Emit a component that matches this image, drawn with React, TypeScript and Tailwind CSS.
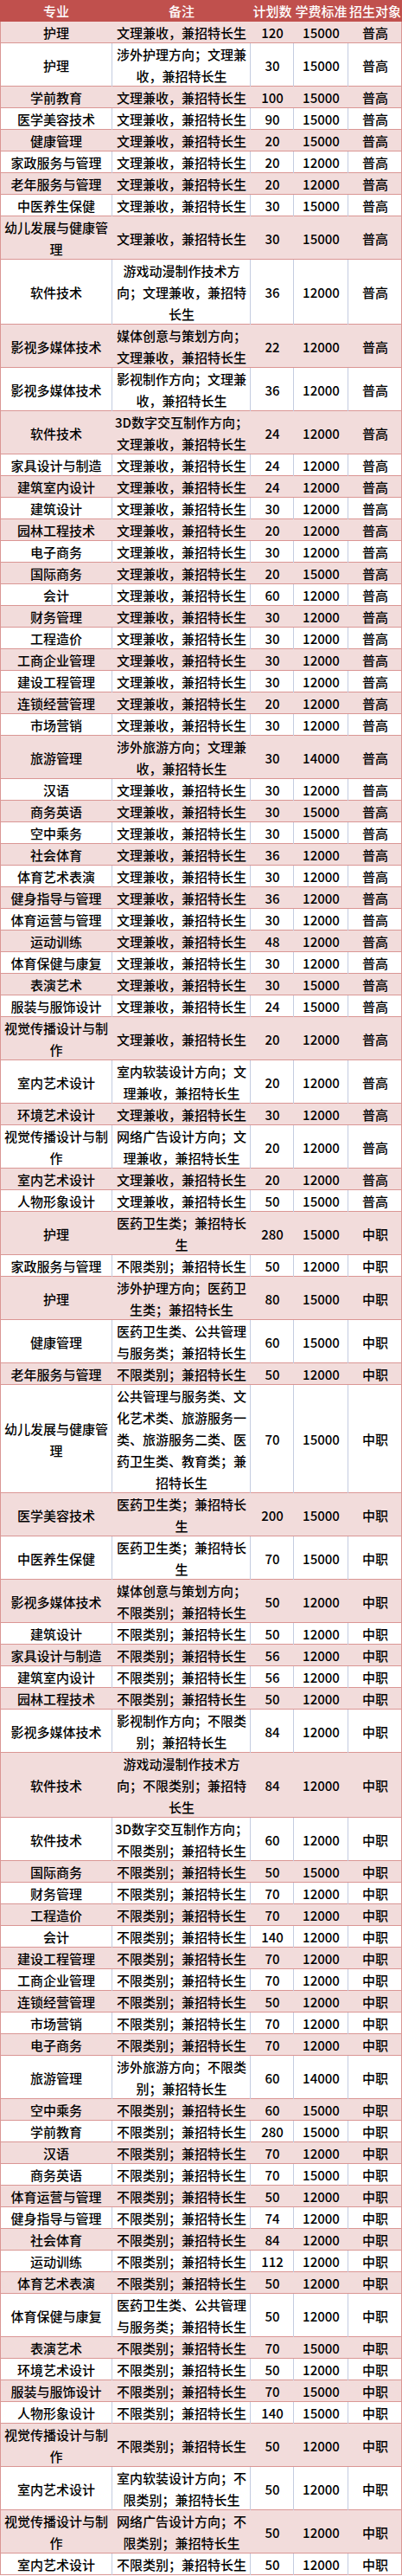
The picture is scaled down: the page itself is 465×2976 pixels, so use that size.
const A = "文理兼收，兼招特长生"
const B = "不限类别；兼招特长生"

// [专业, 备注, 计划数, 学费标准]
const rows: [string, string, string, string][] = [
  ["护理", A, "120", "15000"],
  ["护理", "涉外护理方向；文理兼收，兼招特长生", "30", "15000"],
  ["学前教育", A, "100", "15000"],
  ["医学美容技术", A, "90", "15000"],
  ["健康管理", A, "20", "15000"],
  ["家政服务与管理", A, "20", "12000"],
  ["老年服务与管理", A, "20", "12000"],
  ["中医养生保健", A, "30", "15000"],
  ["幼儿发展与健康管理", A, "30", "15000"],
  ["软件技术", "游戏动漫制作技术方向；文理兼收，兼招特长生", "36", "12000"],
  ["影视多媒体技术", "媒体创意与策划方向；文理兼收，兼招特长生", "22", "12000"],
  ["影视多媒体技术", "影视制作方向；文理兼收，兼招特长生", "36", "12000"],
  ["软件技术", "3D数字交互制作方向；文理兼收，兼招特长生", "24", "12000"],
  ["家具设计与制造", A, "24", "12000"],
  ["建筑室内设计", A, "24", "12000"],
  ["建筑设计", A, "30", "12000"],
  ["园林工程技术", A, "20", "12000"],
  ["电子商务", A, "30", "12000"],
  ["国际商务", A, "20", "15000"],
  ["会计", A, "60", "12000"],
  ["财务管理", A, "30", "12000"],
  ["工程造价", A, "30", "12000"],
  ["工商企业管理", A, "30", "12000"],
  ["建设工程管理", A, "30", "12000"],
  ["连锁经营管理", A, "20", "12000"],
  ["市场营销", A, "30", "12000"],
  ["旅游管理", "涉外旅游方向；文理兼收，兼招特长生", "30", "14000"],
  ["汉语", A, "30", "12000"],
  ["商务英语", A, "30", "15000"],
  ["空中乘务", A, "30", "15000"],
  ["社会体育", A, "36", "12000"],
  ["体育艺术表演", A, "30", "12000"],
  ["健身指导与管理", A, "36", "12000"],
  ["体育运营与管理", A, "30", "12000"],
  ["运动训练", A, "48", "12000"],
  ["体育保健与康复", A, "30", "12000"],
  ["表演艺术", A, "30", "15000"],
  ["服装与服饰设计", A, "24", "15000"],
  ["视觉传播设计与制作", A, "20", "12000"],
  ["室内艺术设计", "室内软装设计方向；文理兼收，兼招特长生", "20", "12000"],
  ["环境艺术设计", A, "30", "12000"],
  ["视觉传播设计与制作", "网络广告设计方向；文理兼收，兼招特长生", "20", "12000"],
  ["室内艺术设计", A, "20", "12000"],
  ["人物形象设计", A, "50", "15000"],
  ["护理", "医药卫生类；兼招特长生", "280", "15000"],
  ["家政服务与管理", B, "50", "12000"],
  ["护理", "涉外护理方向；医药卫生类；兼招特长生", "80", "15000"],
  ["健康管理", "医药卫生类、公共管理与服务类；兼招特长生", "60", "15000"],
  ["老年服务与管理", B, "50", "12000"],
  ["幼儿发展与健康管理", "公共管理与服务类、文化艺术类、旅游服务一类、旅游服务二类、医药卫生类、教育类；兼招特长生", "70", "15000"],
  ["医学美容技术", "医药卫生类；兼招特长生", "200", "15000"],
  ["中医养生保健", "医药卫生类；兼招特长生", "70", "15000"],
  ["影视多媒体技术", "媒体创意与策划方向；不限类别；兼招特长生", "50", "12000"],
  ["建筑设计", B, "50", "12000"],
  ["家具设计与制造", B, "56", "12000"],
  ["建筑室内设计", B, "56", "12000"],
  ["园林工程技术", B, "50", "12000"],
  ["影视多媒体技术", "影视制作方向；不限类别；兼招特长生", "84", "12000"],
  ["软件技术", "游戏动漫制作技术方向；不限类别；兼招特长生", "84", "12000"],
  ["软件技术", "3D数字交互制作方向；不限类别；兼招特长生", "60", "12000"],
  ["国际商务", B, "50", "15000"],
  ["财务管理", B, "70", "12000"],
  ["工程造价", B, "70", "12000"],
  ["会计", B, "140", "12000"],
  ["建设工程管理", B, "70", "12000"],
  ["工商企业管理", B, "70", "12000"],
  ["连锁经营管理", B, "50", "12000"],
  ["市场营销", B, "70", "12000"],
  ["电子商务", B, "70", "12000"],
  ["旅游管理", "涉外旅游方向；不限类别；兼招特长生", "60", "14000"],
  ["空中乘务", B, "60", "15000"],
  ["学前教育", B, "280", "15000"],
  ["汉语", B, "70", "12000"],
  ["商务英语", B, "70", "15000"],
  ["体育运营与管理", B, "50", "12000"],
  ["健身指导与管理", B, "74", "12000"],
  ["社会体育", B, "84", "12000"],
  ["运动训练", B, "112", "12000"],
  ["体育艺术表演", B, "50", "12000"],
  ["体育保健与康复", "医药卫生类、公共管理与服务类；兼招特长生", "50", "12000"],
  ["表演艺术", B, "70", "15000"],
  ["环境艺术设计", B, "50", "12000"],
  ["服装与服饰设计", B, "70", "15000"],
  ["人物形象设计", B, "140", "15000"],
  ["视觉传播设计与制作", B, "50", "12000"],
  ["室内艺术设计", "室内软装设计方向；不限类别；兼招特长生", "50", "12000"],
  ["视觉传播设计与制作", "网络广告设计方向；不限类别；兼招特长生", "50", "12000"],
  ["室内艺术设计", B, "50", "12000"],
]

const cols = "grid grid-cols-[130px_160px_50px_63px_62px]"

export default function App() {
  return (
    <main
      className="w-[465px] bg-white text-black text-[15px] leading-[25px]"
      style={{ fontFamily: '"Noto Sans CJK SC", "Noto Sans", sans-serif' }}
    >
      <div className={`${cols} bg-[#c0504d] text-white font-medium`}>
        <div className="flex items-center justify-center whitespace-nowrap">专业</div>
        <div className="flex items-center justify-center whitespace-nowrap">备注</div>
        <div className="flex items-center justify-center whitespace-nowrap">计划数</div>
        <div className="flex items-center justify-center whitespace-nowrap">学费标准</div>
        <div className="flex items-center justify-center whitespace-nowrap">招生对象</div>
      </div>

      {rows.map(([major, note, count, fee], i) => {
        const pink = i % 2 === 0
        const target = i < 44 ? "普高" : "中职"
        const cell = pink
          ? "flex items-center justify-center text-center"
          : "flex items-center justify-center text-center shadow-[inset_-1px_0_0_#c4cce0]"
        return (
          <div
            key={i}
            className={`${cols} font-medium shadow-[inset_0_-1px_0_#da9694,inset_1px_0_0_#da9694,inset_-1px_0_0_#da9694] ${
              pink ? "bg-[#f2dcdb]" : "bg-white"
            }`}
          >
            <div className={cell}>{major}</div>
            <div className={cell}>{note}</div>
            <div className={cell}>{count}</div>
            <div className={cell}>{fee}</div>
            <div className="flex items-center justify-center text-center">{target}</div>
          </div>
        )
      })}
    </main>
  )
}
